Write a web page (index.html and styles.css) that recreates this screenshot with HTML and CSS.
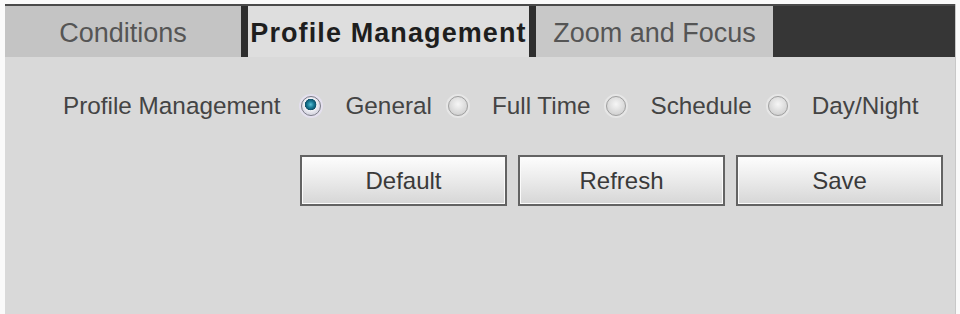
FILE: index.html
```html
<!DOCTYPE html>
<html lang="en">
<head>
    <meta charset="UTF-8">
    <meta name="viewport" content="width=device-width, initial-scale=1.0">
    <title>Profile Management</title>
    <link rel="stylesheet" href="styles.css">
</head>
<body>

<div class="panel">
    <div class="tabs">
        <div class="tab">Conditions</div>
        <div class="tab active">Profile Management</div>
        <div class="tab">Zoom and Focus</div>
        <div class="tab-rest"></div>
    </div>

    <div class="content">
        <div class="profile-row">
            <span class="row-label">Profile Management</span>
            <label class="option"><span class="radio checked"></span>General</label>
            <label class="option"><span class="radio"></span>Full Time</label>
            <label class="option"><span class="radio"></span>Schedule</label>
            <label class="option"><span class="radio"></span>Day/Night</label>
        </div>

        <div class="buttons">
            <button class="btn">Default</button>
            <button class="btn">Refresh</button>
            <button class="btn">Save</button>
        </div>
    </div>
</div>

</body>
</html>
```

FILE: styles.css
```css
body { font-family: "Liberation Sans", Arial, sans-serif; margin: 0; padding: 0; background-color: #fafafa; }
.panel { margin: 4px 0 0 5px; width: 950px; height: 310px; background-color: #d9d9d9; border-right: 1px solid #c8c8c8; display: flex; flex-direction: column; }
.tabs { display: flex; height: 51px; border-top: 2px solid #4a4a4a; }
.tab { display: flex; align-items: center; justify-content: center; padding-top: 3px; box-sizing: border-box; white-space: nowrap; font-size: 27px; color: #555; background-color: #c4c4c4; width: 236px; }
.tab + .tab { border-left: 7px solid #2e2e2e; }
.tab.active { width: 288px; background-color: #dedede; color: #1e1e1e; font-weight: bold; letter-spacing: 1.1px; }
.tab:nth-child(3) { width: 244px; background-color: #c8c8c8; }
.tab-rest { flex-grow: 1; background-color: #363636; }
.content { flex-grow: 1; background-color: #d9d9d9; }
.profile-row { display: flex; align-items: center; padding: 36px 0 0 58px; font-size: 24.3px; line-height: 26px; color: #444; }
.row-label { margin-right: 21px; }
.option { display: flex; align-items: center; margin-right: 16px; }
.radio { width: 18px; height: 18px; border-radius: 50%; margin-right: 24px; border: 1px solid #a0a0a0; background: radial-gradient(circle at 50% 40%, #f6f6f6, #c6c6c6); box-shadow: 0 0 0 2px #e6e6e6; }
.radio.checked { border-color: #7d7d8c; background: radial-gradient(circle at 48% 42%, #5cc0d6 0, #1a7f9a 3px, #0d5069 5.5px, #f2f2f6 6px, #dcdce6 9px); box-shadow: 0 0 0 2px #e4e0ee; }
.buttons { display: flex; gap: 11px; margin: 36px 0 0 295px; }
.btn { width: 207px; height: 51px; font-family: "Liberation Sans", Arial, sans-serif; font-size: 24px; color: #3a3a3a; border: 2px solid #636363; box-shadow: inset 0 0 0 1px #fbfbfb; background: linear-gradient(#fdfdfd, #ececec 45%, #d6d6d6); padding: 0; }
```
